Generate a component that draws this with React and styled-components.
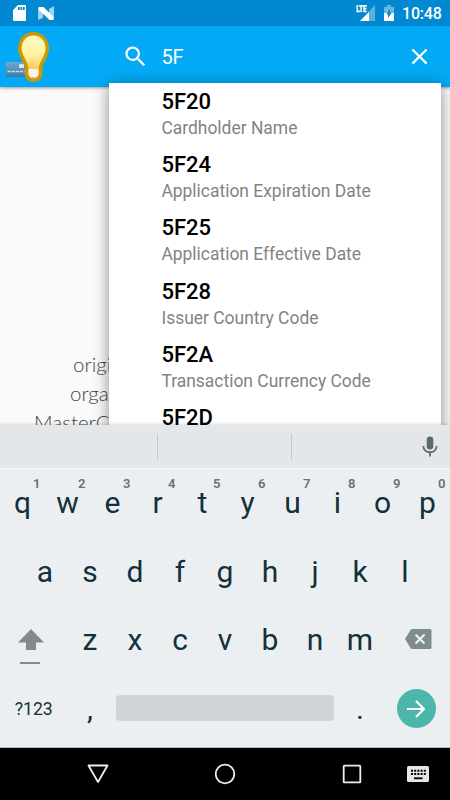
import { Component } from 'react'
import styled, { createGlobalStyle } from 'styled-components'

const color = {
  primary: '#03a9f4',
  primaryDark: '#0288d1',
  keyboard: '#eceff1',
  strip: '#e4e7e9',
  key: '#13303b',
  muted: '#7e8b8f',
  teal: '#4db6ac',
}

const GlobalStyle = createGlobalStyle`
  * {
    box-sizing: border-box;
  }

  body {
    margin: 0;
    font-family: Roboto, sans-serif;
  }
`

const Screen = styled.div`
  display: flex;
  flex-direction: column;
  width: 450px;
  height: 800px;
  overflow: hidden;
  background: #fafafa;
`

const StatusBar = styled.div`
  display: flex;
  align-items: center;
  flex: none;
  height: 26px;
  padding: 0 9px 0 13px;
  background: ${color.primaryDark};

  svg {
    display: block;
  }
`

const StatusGroup = styled.div`
  display: flex;
  align-items: center;
  gap: ${({ gap }) => gap}px;
`

const Clock = styled.span`
  width: 39px;
  color: #fff;
  font-size: 16px;
  font-weight: 500;
  line-height: 24px;
  letter-spacing: -0.2px;
  padding-top: 2px;
`

const Spacer = styled.div`
  flex: 1;
`

const Viewport = styled.div`
  position: relative;
  flex: 0 0 399px;
  overflow: hidden;
`

const AppBar = styled.div`
  display: flex;
  align-items: center;
  height: 61px;
  padding: 0 17px 0 5px;
  background: ${color.primary};
  box-shadow: 0 1px 3px rgba(0, 0, 0, 0.4);

  svg {
    display: block;
    flex: none;
  }
`

const SearchField = styled.div`
  display: flex;
  align-items: center;
  flex: 1;
  margin-left: 71px;
`

const Query = styled.span`
  flex: 1;
  margin-left: 12.5px;
  color: #fff;
  font-size: 20px;
  line-height: 26px;
  letter-spacing: -0.3px;
  padding-top: 1px;
`

const Intro = styled.div`
  width: 225px;
  margin: 263px 0 0 34px;
  color: #444;
  font-family: Lato, sans-serif;
  font-size: 20.5px;
  font-weight: 300;
  line-height: 29px;
`

const IntroLine = styled.div`
  padding-left: ${({ indent }) => indent}px;
  white-space: nowrap;
`

const Suggestions = styled.div`
  position: absolute;
  top: 57px;
  left: 109px;
  width: 332px;
  height: 420px;
  padding-top: 5.6px;
  background: #fff;
  box-shadow: 0 3px 14px rgba(0, 0, 0, 0.45);
`

const Suggestion = styled.div`
  height: 63.35px;
  padding-left: 52.4px;
`

const Tag = styled.div`
  color: #000;
  font-size: 22px;
  font-weight: 500;
  line-height: 26px;
`

const TagName = styled.div`
  color: #838383;
  font-size: 17.45px;
  line-height: 26px;
`

const Keyboard = styled.div`
  position: relative;
  flex: 0 0 323px;
  background: ${color.keyboard};
  border-bottom: 1px solid #b5b8ba;
  box-shadow: 0 -1px 3px rgba(0, 0, 0, 0.15);
`

const Strip = styled.div`
  display: grid;
  grid-template-columns: 158px 134px 1fr;
  align-items: center;
  height: 44px;
  background: ${color.strip};
  border-bottom: 1px solid #f3f5f6;
`

const StripCell = styled.div`
  height: 26px;
  border-right: ${({ divided }) => (divided ? '1px solid #c5c9cb' : 'none')};
  display: flex;
  align-items: center;
  justify-content: flex-end;
  padding-right: ${({ divided }) => (divided ? 0 : 12)}px;
`

const KeyRow = styled.div`
  display: flex;
  justify-content: center;
  height: 68.7px;
`

const Key = styled.div`
  position: relative;
  display: flex;
  align-items: center;
  justify-content: center;
  width: ${({ width }) => width || 45}px;
  height: 67px;
  color: ${color.key};
  font-size: ${({ size }) => size || 30}px;

  svg {
    display: block;
  }
`

const ShiftKey = styled(Key)`
  padding: 14px 5px 0 0;
`

const BackspaceKey = styled(Key)`
  padding: 0 0 1px 4px;
`

const Hint = styled.span`
  position: absolute;
  top: 7px;
  right: 4.5px;
  color: #647379;
  font-size: 13px;
  font-weight: 600;
  line-height: 15px;
`

const SpaceBar = styled.div`
  width: 218px;
  height: 26px;
  margin: 20px 3.5px 0;
  border-radius: 4px;
  background: #d0d5d8;
`

const EnterButton = styled.div`
  display: flex;
  align-items: center;
  justify-content: center;
  width: 39px;
  height: 39px;
  border-radius: 50%;
  background: ${color.teal};
`

const NavBar = styled.div`
  display: grid;
  grid-template-columns: 65px 66px 188px 66px 65px;
  align-items: center;
  flex: 0 0 52px;
  background: #000;

  svg {
    display: block;
    justify-self: center;
  }
`

const SdCardIcon = () => (
  <svg width="13" height="16" viewBox="0 0 13 16">
    <path
      fill="#fff"
      fillRule="evenodd"
      d="M5 0h7a1 1 0 0 1 1 1v14a1 1 0 0 1-1 1H1a1 1 0 0 1-1-1V5zM5 2v3h1.700V2zm2.500 0v3h1.700V2zm2.500 0v3h1.700V2z"
    />
  </svg>
)

const NougatIcon = () => (
  <svg width="16" height="15" viewBox="0 0 16 15">
    <path fill="#9fd2ef" d="M0 1l5 3v8l-5 2zM16 0v13l-5-3V3z" />
    <path fill="#fff" d="M1 1h4.500l10 10v3h-4L1 4z" />
  </svg>
)

const SignalIcon = () => (
  <svg width="20" height="17" viewBox="0 0 20 17">
    <path fill="#5ab1df" d="M19 0v16H4z" />
    <path fill={color.primaryDark} d="M0 0h11.500v8H0z" />
    <path fill="#fff" d="M13 7v9H4z" />
    <text
      x="0.300"
      y="7.300"
      fill="#fff"
      stroke="#fff"
      strokeWidth="0.300"
      fontFamily="Roboto"
      fontSize="9"
      fontWeight="900"
      textLength="10.200"
      lengthAdjust="spacingAndGlyphs"
    >
      LTE
    </text>
  </svg>
)

const BatteryIcon = () => (
  <svg width="10" height="17" viewBox="0 0 10 17">
    <path fill="#67b8e3" d="M3 0h4v2h3v7H0V2h3z" />
    <path fill="#fff" d="M0 8h10v8H0z" />
    <path fill={color.primaryDark} d="M6 3.500v4h2L4 13V9.500H2.500z" />
  </svg>
)

const BulbLogo = () => (
  <svg width="46" height="52" viewBox="0 0 46 52">
    <defs>
      <linearGradient id="card" x1="0" y1="0" x2="0" y2="1">
        <stop offset="0" stopColor="#6fa8cf" />
        <stop offset="1" stopColor="#3c7ba7" />
      </linearGradient>
      <linearGradient id="glass" x1="0" y1="0" x2="0" y2="1">
        <stop offset="0" stopColor="#fffcc4" />
        <stop offset="0.45" stopColor="#fff3a0" />
        <stop offset="1" stopColor="#fda92d" />
      </linearGradient>
    </defs>
    <rect x="0.5" y="31" width="26" height="15" rx="1.5" fill="url(#card)" />
    <rect x="14" y="33" width="5" height="4" rx="0.6" fill="#d7e8f2" />
    <path
      d="M2.5 40.5h17"
      stroke="#c9dfec"
      strokeWidth="1.5"
      strokeDasharray="3.2 0.9"
    />
    <path
      d="M28.5 2.8C20 2.8 14.8 9.5 14.8 17.5c0 7.5 4.6 10.5 6.6 18 .8 3-.6 5.5.2 8.5 1 3.5 3.8 5.2 7 5.2s6-1.7 7-5.2c.8-3-.6-5.5.2-8.5 2-7.5 6.5-10.5 6.5-18C42.3 9.5 37 2.8 28.5 2.8z"
      fill="url(#glass)"
      stroke="#cc9904"
      strokeWidth="3.6"
    />
    <path
      d="M23.600 38h9.800v5c0 2-1.500 3-2.900 3.300v1h-4v-1c-1.500-.3-2.900-1.300-2.900-3.300z"
      fill="#f7f4ec"
    />
    <path d="M26.500 46.300h4l-2 2z" fill="#b9a878" />
  </svg>
)

const SearchIcon = () => (
  <svg width="27" height="27" viewBox="0 0 24 24" fill="#fff">
    <path d="M15.500 14h-.79l-.28-.27A6.471 6.471 0 0 0 16 9.500 6.500 6.500 0 1 0 9.500 16c1.610 0 3.090-.59 4.230-1.570l.27.28v.79l5 4.990L20.490 19l-4.990-5zm-6 0C7.010 14 5 11.990 5 9.500S7.010 5 9.500 5 14 7.010 14 9.500 11.990 14 9.500 14z" />
  </svg>
)

const CloseIcon = () => (
  <svg width="27" height="27" viewBox="0 0 24 24" fill="#fff">
    <path d="M19 6.410L17.590 5 12 10.590 6.410 5 5 6.410 10.590 12 5 17.590 6.410 19 12 13.410 17.590 19 19 17.590 13.410 12z" />
  </svg>
)

const MicIcon = () => (
  <svg width="16" height="21" viewBox="0 0 16 21">
    <rect x="4.700" y="0.500" width="6.600" height="13" rx="3.300" fill="#5d6b71" />
    <path
      d="M1.300 10c.2 3.800 3 6.200 6.700 6.200s6.500-2.400 6.700-6.200M8 16v4.500"
      fill="none"
      stroke="#5d6b71"
      strokeWidth="1.800"
    />
  </svg>
)

const ShiftIcon = () => (
  <svg width="26" height="36" viewBox="0 0 26 36" fill={color.muted}>
    <path d="M13 0l13 13.500h-8V21H8v-7.500H0z" />
    <path d="M2 33h20v2H2z" />
  </svg>
)

const BackspaceIcon = () => (
  <svg width="27" height="20" viewBox="0 0 27 20">
    <path
      fill={color.muted}
      d="M7 0h18a1.500 1.500 0 0 1 1.500 1.500v17A1.500 1.500 0 0 1 25 20H7q-1 0-1.500-1L0 10l5.500-9Q6 0 7 0z"
    />
    <path
      d="M10.500 5.500l9 9m0-9l-9 9"
      stroke={color.keyboard}
      strokeWidth="2.300"
    />
  </svg>
)

const ArrowIcon = () => (
  <svg width="18" height="18" viewBox="0 0 18 18">
    <path
      d="M0 9h16.500M9 1l8 8-8 8"
      fill="none"
      stroke="#fff"
      strokeWidth="2.200"
    />
  </svg>
)

const BackIcon = () => (
  <svg width="22" height="20" viewBox="0 0 22 20">
    <path
      d="M1.500 1.500h19L11 18z"
      fill="none"
      stroke="#eee"
      strokeWidth="1.800"
      strokeLinejoin="round"
    />
  </svg>
)

const HomeIcon = () => (
  <svg width="22" height="22" viewBox="0 0 22 22">
    <circle cx="11" cy="11" r="9.300" fill="none" stroke="#eee" strokeWidth="1.800" />
  </svg>
)

const RecentsIcon = () => (
  <svg width="20" height="20" viewBox="0 0 20 20">
    <rect
      x="1.700"
      y="1.700"
      width="16.600"
      height="16.600"
      rx="0.600"
      fill="none"
      stroke="#eee"
      strokeWidth="1.800"
    />
  </svg>
)

const KeyboardIcon = () => (
  <svg width="22" height="16" viewBox="0 0 22 16">
    <rect width="22" height="16" rx="1.500" fill="#e6e6e6" />
    <path
      d="M4 4.800h15M4 8h15"
      stroke="#000"
      strokeWidth="2"
      strokeDasharray="2 1.200"
    />
    <path d="M7 12.300h8.500" stroke="#000" strokeWidth="1.800" />
  </svg>
)

const tags = [
  ['5F20', 'Cardholder Name'],
  ['5F24', 'Application Expiration Date'],
  ['5F25', 'Application Effective Date'],
  ['5F28', 'Issuer Country Code'],
  ['5F2A', 'Transaction Currency Code'],
  ['5F2D', ''],
]

export default class App extends Component {
  render() {
    return (
      <Screen>
        <GlobalStyle />
        <StatusBar>
          <StatusGroup gap={12}>
            <SdCardIcon />
            <NougatIcon />
          </StatusGroup>
          <Spacer />
          <StatusGroup gap={8}>
            <SignalIcon />
            <BatteryIcon />
            <Clock>10:48</Clock>
          </StatusGroup>
        </StatusBar>
        <Viewport>
          <AppBar>
            <BulbLogo />
            <SearchField>
              <SearchIcon />
              <Query>5F</Query>
              <CloseIcon />
            </SearchField>
          </AppBar>
          <Intro>
            <IntroLine indent={39}>origi</IntroLine>
            <IntroLine indent={36}>orga</IntroLine>
            <IntroLine indent={0}>MasterC</IntroLine>
          </Intro>
          <Suggestions>
            {tags.map(([tag, name]) => (
              <Suggestion key={tag}>
                <Tag>{tag}</Tag>
                {name && <TagName>{name}</TagName>}
              </Suggestion>
            ))}
          </Suggestions>
        </Viewport>
        <Keyboard>
          <Strip>
            <StripCell divided />
            <StripCell divided />
            <StripCell>
              <MicIcon />
            </StripCell>
          </Strip>
          <KeyRow>
            {'qwertyuiop'.split('').map((letter, i) => (
              <Key key={letter}>
                {letter}
                <Hint>{(i + 1) % 10}</Hint>
              </Key>
            ))}
          </KeyRow>
          <KeyRow>
            {'asdfghjkl'.split('').map(letter => (
              <Key key={letter}>{letter}</Key>
            ))}
          </KeyRow>
          <KeyRow>
            <ShiftKey width={67.5}>
              <ShiftIcon />
            </ShiftKey>
            {'zxcvbnm'.split('').map(letter => (
              <Key key={letter}>{letter}</Key>
            ))}
            <BackspaceKey width={67.5}>
              <BackspaceIcon />
            </BackspaceKey>
          </KeyRow>
          <KeyRow>
            <Key width={67.5} size={17.6}>
              ?123
            </Key>
            <Key>,</Key>
            <SpaceBar />
            <Key>.</Key>
            <Key width={67.5}>
              <EnterButton>
                <ArrowIcon />
              </EnterButton>
            </Key>
          </KeyRow>
        </Keyboard>
        <NavBar>
          <span />
          <BackIcon />
          <HomeIcon />
          <RecentsIcon />
          <KeyboardIcon />
        </NavBar>
      </Screen>
    )
  }
}
